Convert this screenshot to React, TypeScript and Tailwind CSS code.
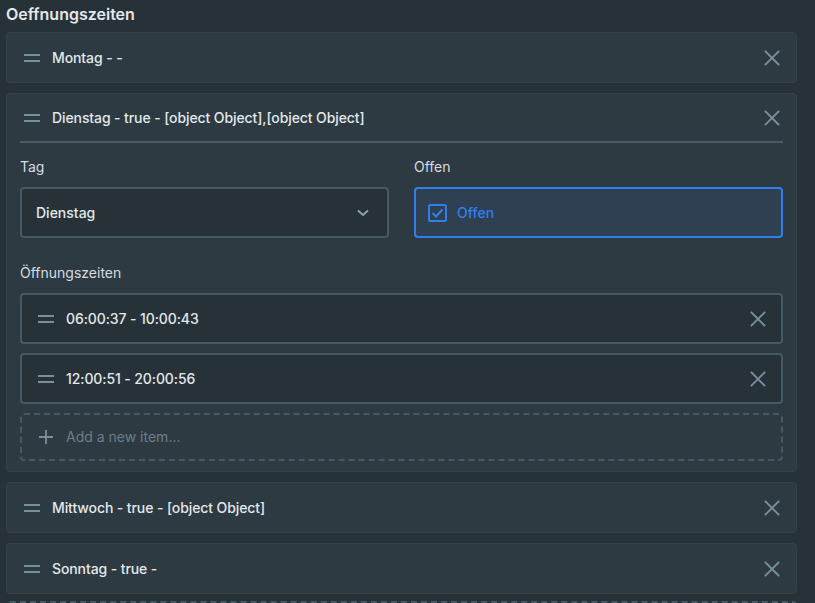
import * as React from 'react';

const days = [
  { label: 'Montag - -', open: false },
  { label: 'Dienstag - true - [object Object],[object Object]', open: true },
  { label: 'Mittwoch - true - [object Object]', open: false },
  { label: 'Sonntag - true -', open: false },
];

const slots = ['06:00:37 - 10:00:43', '12:00:51 - 20:00:56'];

function Handle() {
  return (
    <div className="flex w-4 shrink-0 flex-col gap-[4px]">
      <span className="h-[2px] w-4 bg-[#78909c]" />
      <span className="h-[2px] w-4 bg-[#78909c]" />
    </div>
  );
}

function Close() {
  return (
    <svg width="16" height="16" viewBox="0 0 16 16" className="shrink-0" aria-hidden>
      <path d="M1.5 1.5 L14.5 14.5 M14.5 1.5 L1.5 14.5" stroke="#78909c" strokeWidth="1.8" strokeLinecap="square" />
    </svg>
  );
}

function ItemRow({ text, inner }: { text: string; inner?: boolean }) {
  return (
    <div
      className={
        inner
          ? 'flex h-[51px] items-center gap-3 rounded border-2 border-[#455a64] bg-[#263238] pl-4 pr-[15px]'
          : 'flex h-[49px] items-center gap-3 pl-[17px] pr-4'
      }
    >
      <Handle />
      <span className="flex-1 text-sm font-medium tracking-[-0.1px] text-[#e3e8eb]">{text}</span>
      <Close />
    </div>
  );
}

function AddItem() {
  return (
    <div className="flex h-[48px] items-center gap-3 rounded border-2 border-dashed border-[#455a64] pl-4">
      <svg width="16" height="16" viewBox="0 0 16 16" aria-hidden>
        <path d="M8 1 V15 M1 8 H15" stroke="#78909c" strokeWidth="1.8" />
      </svg>
      <span className="text-sm text-[#6b7f89]">Add a new item...</span>
    </div>
  );
}

function Expanded({ text }: { text: string }) {
  return (
    <div className="rounded border border-[#334149] bg-[#2d3a42] px-[13px] pb-[10px]">
      <div className="flex h-[49px] items-center gap-3 border-b-2 border-[#4b5c66] pl-[4px] pr-[3px]">
        <Handle />
        <span className="flex-1 text-sm font-medium tracking-[-0.1px] text-[#e3e8eb]">{text}</span>
        <Close />
      </div>
      <div className="mt-[14px] grid grid-cols-2 gap-[25px]">
        <div>
          <div className="mb-[10px] text-sm text-[#d6dde1]">Tag</div>
          <div className="flex h-[51px] items-center justify-between rounded border-2 border-[#455a64] bg-[#263238] pl-[14px] pr-[18px]">
            <span className="text-sm font-medium text-[#e3e8eb]">Dienstag</span>
            <svg width="12" height="8" viewBox="0 0 12 8" aria-hidden>
              <path d="M1 1.5 L6 6 L11 1.5" stroke="#8fa3ad" strokeWidth="1.8" fill="none" />
            </svg>
          </div>
        </div>
        <div>
          <div className="mb-[10px] text-sm text-[#d6dde1]">Offen</div>
          <div className="flex h-[51px] items-center gap-[10px] rounded border-2 border-[#2f80ed] bg-[#2e4052] pl-[12px]">
            <svg width="19" height="18" viewBox="0 0 19 18" aria-hidden>
              <rect x="1" y="1" width="17" height="16" rx="1.5" stroke="#2f80ed" strokeWidth="2" fill="none" />
              <path d="M4.5 9 L8 12.5 L14.5 5.5" stroke="#2f80ed" strokeWidth="2" fill="none" />
            </svg>
            <span className="text-sm font-medium text-[#2f80ed]">Offen</span>
          </div>
        </div>
      </div>
      <div className="mt-[25px] mb-[10px] text-sm text-[#d6dde1]">Öffnungszeiten</div>
      <div className="flex flex-col gap-[9px]">
        {slots.map((s) => (
          <ItemRow key={s} text={s} inner />
        ))}
        <AddItem />
      </div>
    </div>
  );
}

export default function App() {
  return (
    <div
      className="h-[603px] overflow-hidden bg-[#263238] pl-[6px] pr-[18px]"
      style={{ fontFamily: 'Inter, "Noto Sans", sans-serif' }}
    >
      <h2 className="pt-[4px] pb-[8px] text-base font-semibold leading-[20px] text-[#e3e8eb]">Oeffnungszeiten</h2>
      <div className="flex flex-col gap-[10px]">
        {days.map((d) =>
          d.open ? (
            <Expanded key={d.label} text={d.label} />
          ) : (
            <div key={d.label} className="rounded border border-[#334149] bg-[#2d3a42]">
              <ItemRow text={d.label} />
            </div>
          ),
        )}
      </div>
      <div className="mt-[7px] h-[48px] rounded border-2 border-dashed border-[#455a64]" />
    </div>
  );
}
